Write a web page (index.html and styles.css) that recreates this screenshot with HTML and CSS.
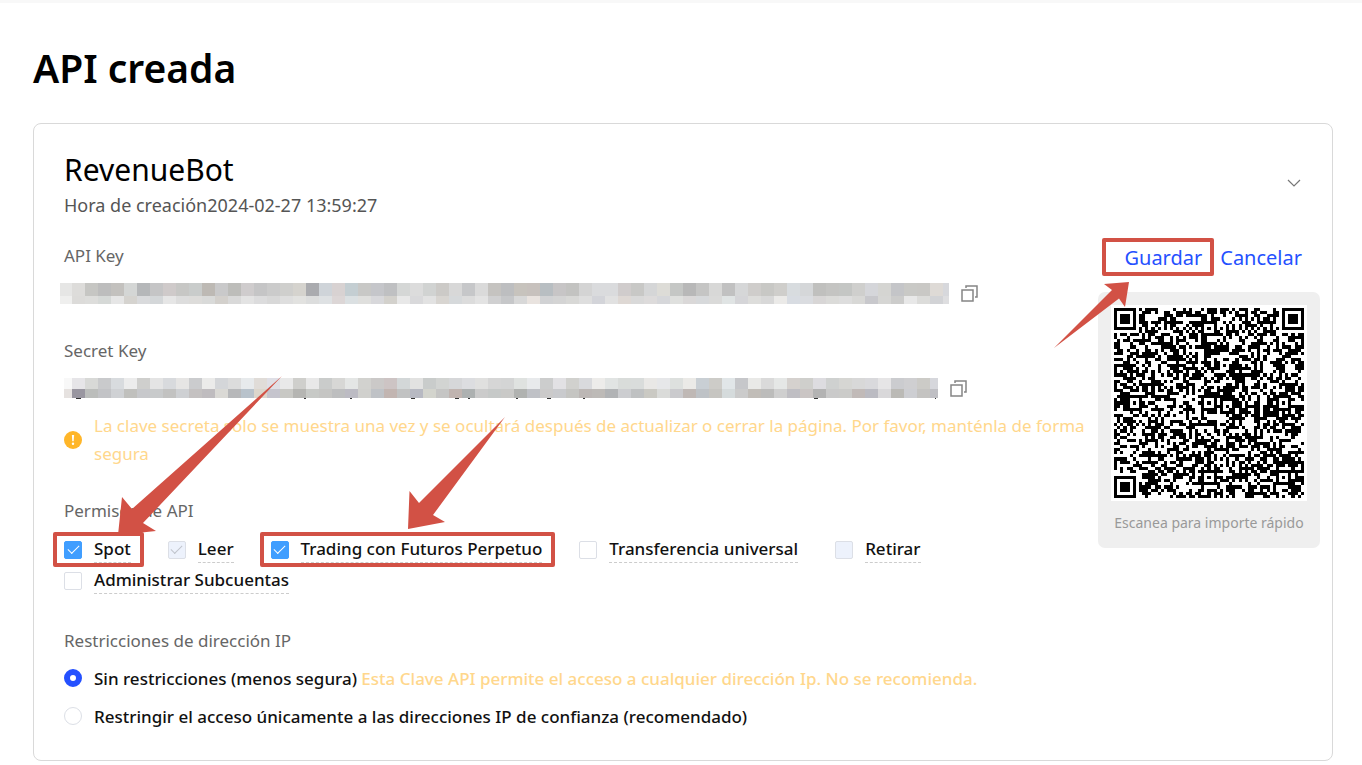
FILE: index.html
```
<!DOCTYPE html>
<html lang="es">
<head>
  <meta charset="UTF-8" />
  <meta name="viewport" content="width=device-width, initial-scale=1.0"/>
  <title>API creada</title>
  <link rel="stylesheet" href="styles.css">
</head>
<body>
  <main class="page">
    <h1>API creada</h1>

    <section class="card">
      <header class="card-header">
        <div>
          <h2>RevenueBot</h2>
          <p class="created">Hora de creación2024-02-27 13:59:27</p>
        </div>
        <button class="icon-button toggle" aria-label="Contraer">
          <svg width="14" height="8" viewBox="0 0 14 8"><path d="M1 1l6 6 6-6" fill="none" stroke="#777" stroke-width="1.2"/></svg>
        </button>
      </header>

      <div class="card-body">
        <div class="details">
          <!-- Keys -->
          <h3>API Key</h3>
          <div class="key-row">
            <svg class="key-mask" id="apiKey" width="890" height="21" role="img" aria-label="API Key oculta"></svg>
            <button class="icon-button" aria-label="Copiar API Key">
              <svg width="17" height="17" viewBox="0 0 17 17" fill="none" stroke="#858585" stroke-width="1.5"><path d="M1 5h11v11H1zM5 3V1h11v11h-2"/></svg>
            </button>
          </div>

          <h3 class="next">Secret Key</h3>
          <div class="key-row">
            <svg class="key-mask" id="secretKey" width="879" height="21" role="img" aria-label="Secret Key oculta"></svg>
            <button class="icon-button" aria-label="Copiar Secret Key">
              <svg width="17" height="17" viewBox="0 0 17 17" fill="none" stroke="#858585" stroke-width="1.5"><path d="M1 5h11v11H1zM5 3V1h11v11h-2"/></svg>
            </button>
          </div>

          <div class="warning">
            <svg width="18" height="18" viewBox="0 0 18 18"><circle cx="9" cy="9" r="9" fill="#ffb629"/><path d="M7.9 4h2.2l-.4 6.300H8.300z" fill="#fff"/><circle cx="9" cy="12.800" r="1.200" fill="#fff"/></svg>
            <p>La clave secreta sólo se muestra una vez y se ocultará después de actualizar o cerrar la página. Por favor, manténla de forma segura</p>
          </div>

          <!-- Permissions -->
          <h3 class="permissions-title">Permisos de API</h3>
          <div class="permissions">
            <label class="option marked">
              <input type="checkbox" checked><span>Spot</span>
              <svg class="arrow arrow-spot" width="164" height="160" viewBox="0 0 164 160"><path d="M164 0L25 147 38 155 0 159 4 121 14 133z"/></svg>
            </label>
            <label class="option"><input type="checkbox" checked disabled><span>Leer</span></label>
            <label class="option marked">
              <input type="checkbox" checked><span>Trading con Futuros Perpetuo</span>
              <svg class="arrow arrow-futures" width="97" height="113" viewBox="0 0 97 113"><path d="M97 0L25 98l12 7L0 112 1.500 74 11 86z"/></svg>
            </label>
            <label class="option"><input type="checkbox"><span>Transferencia universal</span></label>
            <label class="option"><input type="checkbox" disabled><span>Retirar</span></label>
            <label class="option"><input type="checkbox"><span>Administrar Subcuentas</span></label>
          </div>

          <!-- IP restrictions -->
          <h3 class="ip-title">Restricciones de dirección IP</h3>
          <div class="ip-options">
            <label class="radio"><input type="radio" name="ip" checked><span>Sin restricciones (menos segura) <em>Esta Clave API permite el acceso a cualquier dirección Ip. No se recomienda.</em></span></label>
            <label class="radio"><input type="radio" name="ip"><span>Restringir el acceso únicamente a las direcciones IP de confianza (recomendado)</span></label>
          </div>
        </div>

        <aside class="side">
          <div class="actions">
            <button class="text-button marked">Guardar
              <svg class="arrow arrow-save" width="76" height="67" viewBox="0 0 76 67"><path d="M0 66L58 8 50 2 75 0 71 25 65 16.500z"/></svg>
            </button>
            <button class="text-button">Cancelar</button>
          </div>
          <div class="qr-box">
            <svg id="qr" class="qr" viewBox="-1 -1 63 63" shape-rendering="crispEdges" role="img" aria-label="Código QR"></svg>
            <p>Escanea para importe rápido</p>
          </div>
        </aside>
      </div>
    </section>
  </main>
  <script src="script.js"></script>
</body>
</html>
```
FILE: styles.css
```
:root {
  --text-color: #111;
  --muted-color: #666;
  --link-color: #2450ff;
  --warning-color: #ffd78c;
  --check-color: #409eff;
  --mark-color: #d25145;
}

* {
  box-sizing: border-box;
}

body {
  margin: 0;
  border-top: 3px solid #f8f8f8;
  background: #fff;
  color: var(--text-color);
  font-family: "Noto Sans", sans-serif;
  font-size: 17px;
}

h1, h2, h3, p {
  margin: 0;
}

button {
  padding: 0;
  border: none;
  background: none;
  font-family: inherit;
  cursor: pointer;
}

.page {
  padding: 35px 29px 4px 33px;
}

h1 {
  margin-bottom: 25px;
  color: #000;
  font-size: 39px;
  font-weight: 600;
  line-height: 60px;
}

.card {
  border: 1px solid #d9d9d9;
  border-radius: 8px;
  padding: 26px 12px 25px 30px;
}

.card-header {
  display: flex;
  justify-content: space-between;
  align-items: center;
  padding-right: 19px;
}

h2 {
  color: #000;
  font-size: 30px;
  font-weight: 400;
  line-height: 40px;
}

.created {
  color: #555;
  font-size: 18px;
  line-height: 30px;
}

.icon-button {
  display: flex;
}

.toggle {
  margin-top: -4px;
}

.card-body {
  display: grid;
  grid-template-columns: minmax(0, 1fr) 222px;
  gap: 8px;
  margin-top: 23px;
}

h3 {
  color: var(--muted-color);
  font-size: 17px;
  font-weight: 400;
  line-height: 26px;
}

h3.next {
  margin-top: 34px;
}

/* Keys */
.key-row {
  display: flex;
  align-items: center;
  gap: 12px;
  margin-top: 14px;
}

.key-mask {
  flex-shrink: 1;
  min-width: 0;
  margin-left: -5px;
}

.warning {
  display: flex;
  align-items: center;
  gap: 12px;
  margin-top: 13px;
  color: var(--warning-color);
  line-height: 28px;
}

.warning svg {
  flex-shrink: 0;
}

/* Permissions */
.permissions-title {
  margin-top: 30px;
}

.permissions {
  display: flex;
  flex-wrap: wrap;
  column-gap: 37px;
  margin-top: 10px;
}

.option,
.radio {
  display: flex;
  align-items: center;
  gap: 12px;
  font-weight: 500;
  cursor: pointer;
}

.option {
  height: 31px;
}

.option span {
  border-bottom: 1px dashed #ccc;
  line-height: 26px;
}

input {
  appearance: none;
  flex-shrink: 0;
  display: grid;
  place-items: center;
  width: 18px;
  height: 18px;
  margin: 0;
  border: 1px solid #dcdfe6;
  border-radius: 2px;
  background: #fff;
}

input[type="checkbox"]:checked {
  border-color: var(--check-color);
  background: var(--check-color);
}

input[type="checkbox"]:checked::after {
  content: "";
  width: 10px;
  height: 5px;
  margin-bottom: 3px;
  border: solid #fff;
  border-width: 0 0 1px 1px;
  transform: rotate(-45deg);
}

input[type="checkbox"]:disabled {
  border-color: #dcdfe6;
  background: #edf2fc;
}

input[type="checkbox"]:disabled::after {
  border-color: #c0c4cc;
}

/* IP restrictions */
.ip-title {
  margin-top: 32px;
}

.ip-options {
  margin-top: 5px;
}

.radio {
  min-height: 38px;
}

.radio em {
  color: var(--warning-color);
  font-style: normal;
}

input[type="radio"] {
  border-radius: 50%;
}

input[type="radio"]:checked {
  border: 6px solid var(--link-color);
}

/* Side column */
.actions {
  display: flex;
  justify-content: flex-end;
  gap: 18px;
  padding-right: 18px;
}

.text-button {
  color: var(--link-color);
  font-size: 20px;
  line-height: 30px;
}

.qr-box {
  margin-top: 19px;
  padding: 13px 13px 14px;
  border-radius: 7px;
  background: #efefef;
  text-align: center;
}

.qr {
  display: block;
  width: 100%;
  background: #fff;
}

.qr-box p {
  margin-top: 11px;
  color: #999;
  font-size: 14px;
  line-height: 22px;
  white-space: nowrap;
}

/* Red marks */
.marked {
  position: relative;
}

.marked::after {
  content: "";
  position: absolute;
  inset: -2px -13px -2px -11px;
  border: 4px solid var(--mark-color);
  border-radius: 2px;
  pointer-events: none;
}

.text-button.marked::after {
  inset: -5px -12px -3px -22px;
}

.arrow {
  position: absolute;
  z-index: 1;
  fill: var(--mark-color);
  pointer-events: none;
}

.arrow-spot {
  left: 54px;
  top: -158px;
}

.arrow-futures {
  left: 137px;
  top: -117px;
}

.arrow-save {
  right: 72px;
  top: 39px;
}
```
FILE: script.js
```
const NS = 'http://www.w3.org/2000/svg';

function rect(svg, x, y, w, h, fill) {
  const r = document.createElementNS(NS, 'rect');
  r.setAttribute('x', x);
  r.setAttribute('y', y);
  r.setAttribute('width', w);
  r.setAttribute('height', h);
  r.setAttribute('fill', fill);
  svg.appendChild(r);
}

// Pixelated keys: two rows of 13px blocks
function drawMask(id, start, y, split, end, rows) {
  const svg = document.getElementById(id);
  rows.forEach((row, i) => {
    row.split(' ').forEach((color, n) => {
      const x = n === 0 ? start : n * 13;
      rect(svg, x, i ? split : y, (n + 1) * 13 - x, i ? end - split : split - y, '#' + color);
    });
  });
  return svg;
}

drawMask('apiKey', 1, 0, 13, 21, [
  'e6e6e5 dddcda c6c6c3 bdbdbd c3c1be d4d6d5 b5b7b9 c5c5c6 cfcaca c7c7c5 c9cccb bdb9b4 c9c9ca bdbdba cfcccd c5c5c6 cbcbcb cfcfcd d5d3ce aaabaf cfd4d9 d8d2d2 c4ced2 c8c8c6 c5c6ca bfc0c2 d5d7d6 dcdcdc d1d3d2 cccac7 d8d8d8 c6c7c9 dadada c5c3c0 bdbec0 c7c3bd c7c1bd b8bec2 c7c5c6 c3c3c1 d4d4d4 dadbdd dadbdd d0cccc c8c8c6 d5d6d7 dddcd7 c5c7c5 b8b8b8 c5c5c4 d8d8d7 c1c1c1 d6d7d8 cfcdcb c8c8c5 cfcecb d8dcdf d5d7d9 c0c0be c4c4c2 c4c6c4 cfcfcd d5d6da d5d5d2 c4c5c8 c9c9c6 c9c8c5 dedad6 d7d8dc',
  'efefee dcdbd9 dddddb d6d9d7 e6e6e6 d5d3cf d9dadc d4d7d9 e6e6e6 dddddd dddcda d9dad9 d3d0cc d9d9d9 e3e3e3 dcdcdd d8d8d8 dedede e2e2e0 dcdddd dee1e3 dcd6d6 dbe0e2 dfdfdd d8d8db d3d1cc e8e8e8 d9d9db e2e2e2 d8d5d1 d6d9db dcdcdc e3e3e3 d0d0d1 c6c7c9 d8d8d8 e9e3df d1d2d4 d4d4d4 d8d8d6 dedede d3d4d9 e1e1e1 ded8d4 d9d9d9 dddbdb d6d7da dfe0de dad8d8 d7d9db dadad9 e0e4e4 d5d5d8 dddddb d8d8d8 ebeae8 d8dce2 dadce0 d8d6d6 dbdbd9 dddddd d8d8d6 c8c8cc d6d6d4 cccccb e8e8e8 dcdcda d2d3d6 dedee0'
]);

const secret = drawMask('secretKey', 5, 0, 11, 20, [
  'f8f8f8 e6e5e8 d8d9d7 c9cacc d8dbde ececec cfcfcd e4e4e4 d8dadd e6e5e4 cbccce ebebea d4d6d9 dcdcdc e7eaec e0dcd8 dfdfe6 e9e9e9 cfcfcc e8e8e8 cacccb d7d7d5 e4e6e5 d2d2cf cbc9c8 cdc4c4 d3d7d8 e2e2e1 c9cccb d2d4d2 d6d7d9 dcdde0 e0e0df d6d6d6 d4d5d5 dfe2e0 e8eaec cccdcd e2e1e4 d1d1ce d9dadd edecea e1e4e3 d9dcda d9dcdb e9e8e6 e6e7e9 dde0de ebeae7 c9cfd4 cdccc8 e1e6e8 c6c7ca e9e9e7 dadada e5e7e6 d5d1ce cfcfcc dddce0 cfd1d0 d6d6d3 d8d8d8 d9d9dc e6e5e6 cbcccf cfcfd1 cccbc7 d6d7dc',
  'e6e2e0 9996a0 bbbdbb c2c3c6 cfd1d4 c0c0bd c7c8cb c8cacb c2c2c1 ced0d3 c4c1c1 bfbcbf dad9d5 b7b8ba b8c2cb dcd6cc c5c4cd c8c8c4 b5b5b2 c7c9c6 c5c5c3 bdbebf bcbbc3 d0d0cd bfc2c6 c2b5b1 c1c2c2 b7b9c2 d3d4cd c5c5c4 c0b4b0 adb1b1 cbcbcb c6c9c8 c9c9c7 b0b2b0 bfc1c6 cbcaca c9cacd c5c5c2 bcb7b5 bdbab7 b1b3b5 cccdd0 bfc1c2 cac9c3 dadbd9 cacacd bfb8b5 bec2c6 c6c5c1 d5dbdc cbcbcb c1bdb8 bcbcbb cfcfcf bfbec3 cac5c4 b3b3b3 cacaca cbcbc9 c1bab8 bbbbc2 d9d8da bbbab6 cdced2 c4c3c1 bfbfc4'
]);
// descenders left below the blocks
[[17, 5], [245, 2], [291, 2], [352, 4], [396, 4], [409, 2], [457, 2], [488, 4], [524, 2], [755, 4], [876, 1]]
  .forEach(([x, w]) => rect(secret, x, 20, w, 1, '#333'));

// QR code, 61x61 modules
const qr = document.getElementById('qr');
const SIZE = 61;
let seed = 20240227;
function random() {
  seed = (seed * 1103515245 + 12345) % 2147483648;
  return seed / 2147483648;
}

function module(x, y) {
  const dark = random() < 0.54;
  for (const [cx, cy] of [[3, 3], [57, 3], [3, 57]]) {
    const d = Math.max(Math.abs(x - cx), Math.abs(y - cy));
    if (d <= 4) return d !== 4 && d !== 2;
  }
  for (const cx of [6, 30, 54]) {
    for (const cy of [6, 30, 54]) {
      if ((cx === 6 && cy !== 30) || (cx === 54 && cy === 6)) continue;
      const d = Math.max(Math.abs(x - cx), Math.abs(y - cy));
      if (d <= 2) return d !== 1;
    }
  }
  if (x === 6 || y === 6) return (x + y) % 2 === 0;
  return dark;
}

let path = '';
for (let y = 0; y < SIZE; y++) {
  for (let x = 0; x < SIZE; x++) {
    if (module(x, y)) path += `M${x} ${y}h1v1h-1z`;
  }
}
const modules = document.createElementNS(NS, 'path');
modules.setAttribute('d', path);
qr.appendChild(modules);
```
